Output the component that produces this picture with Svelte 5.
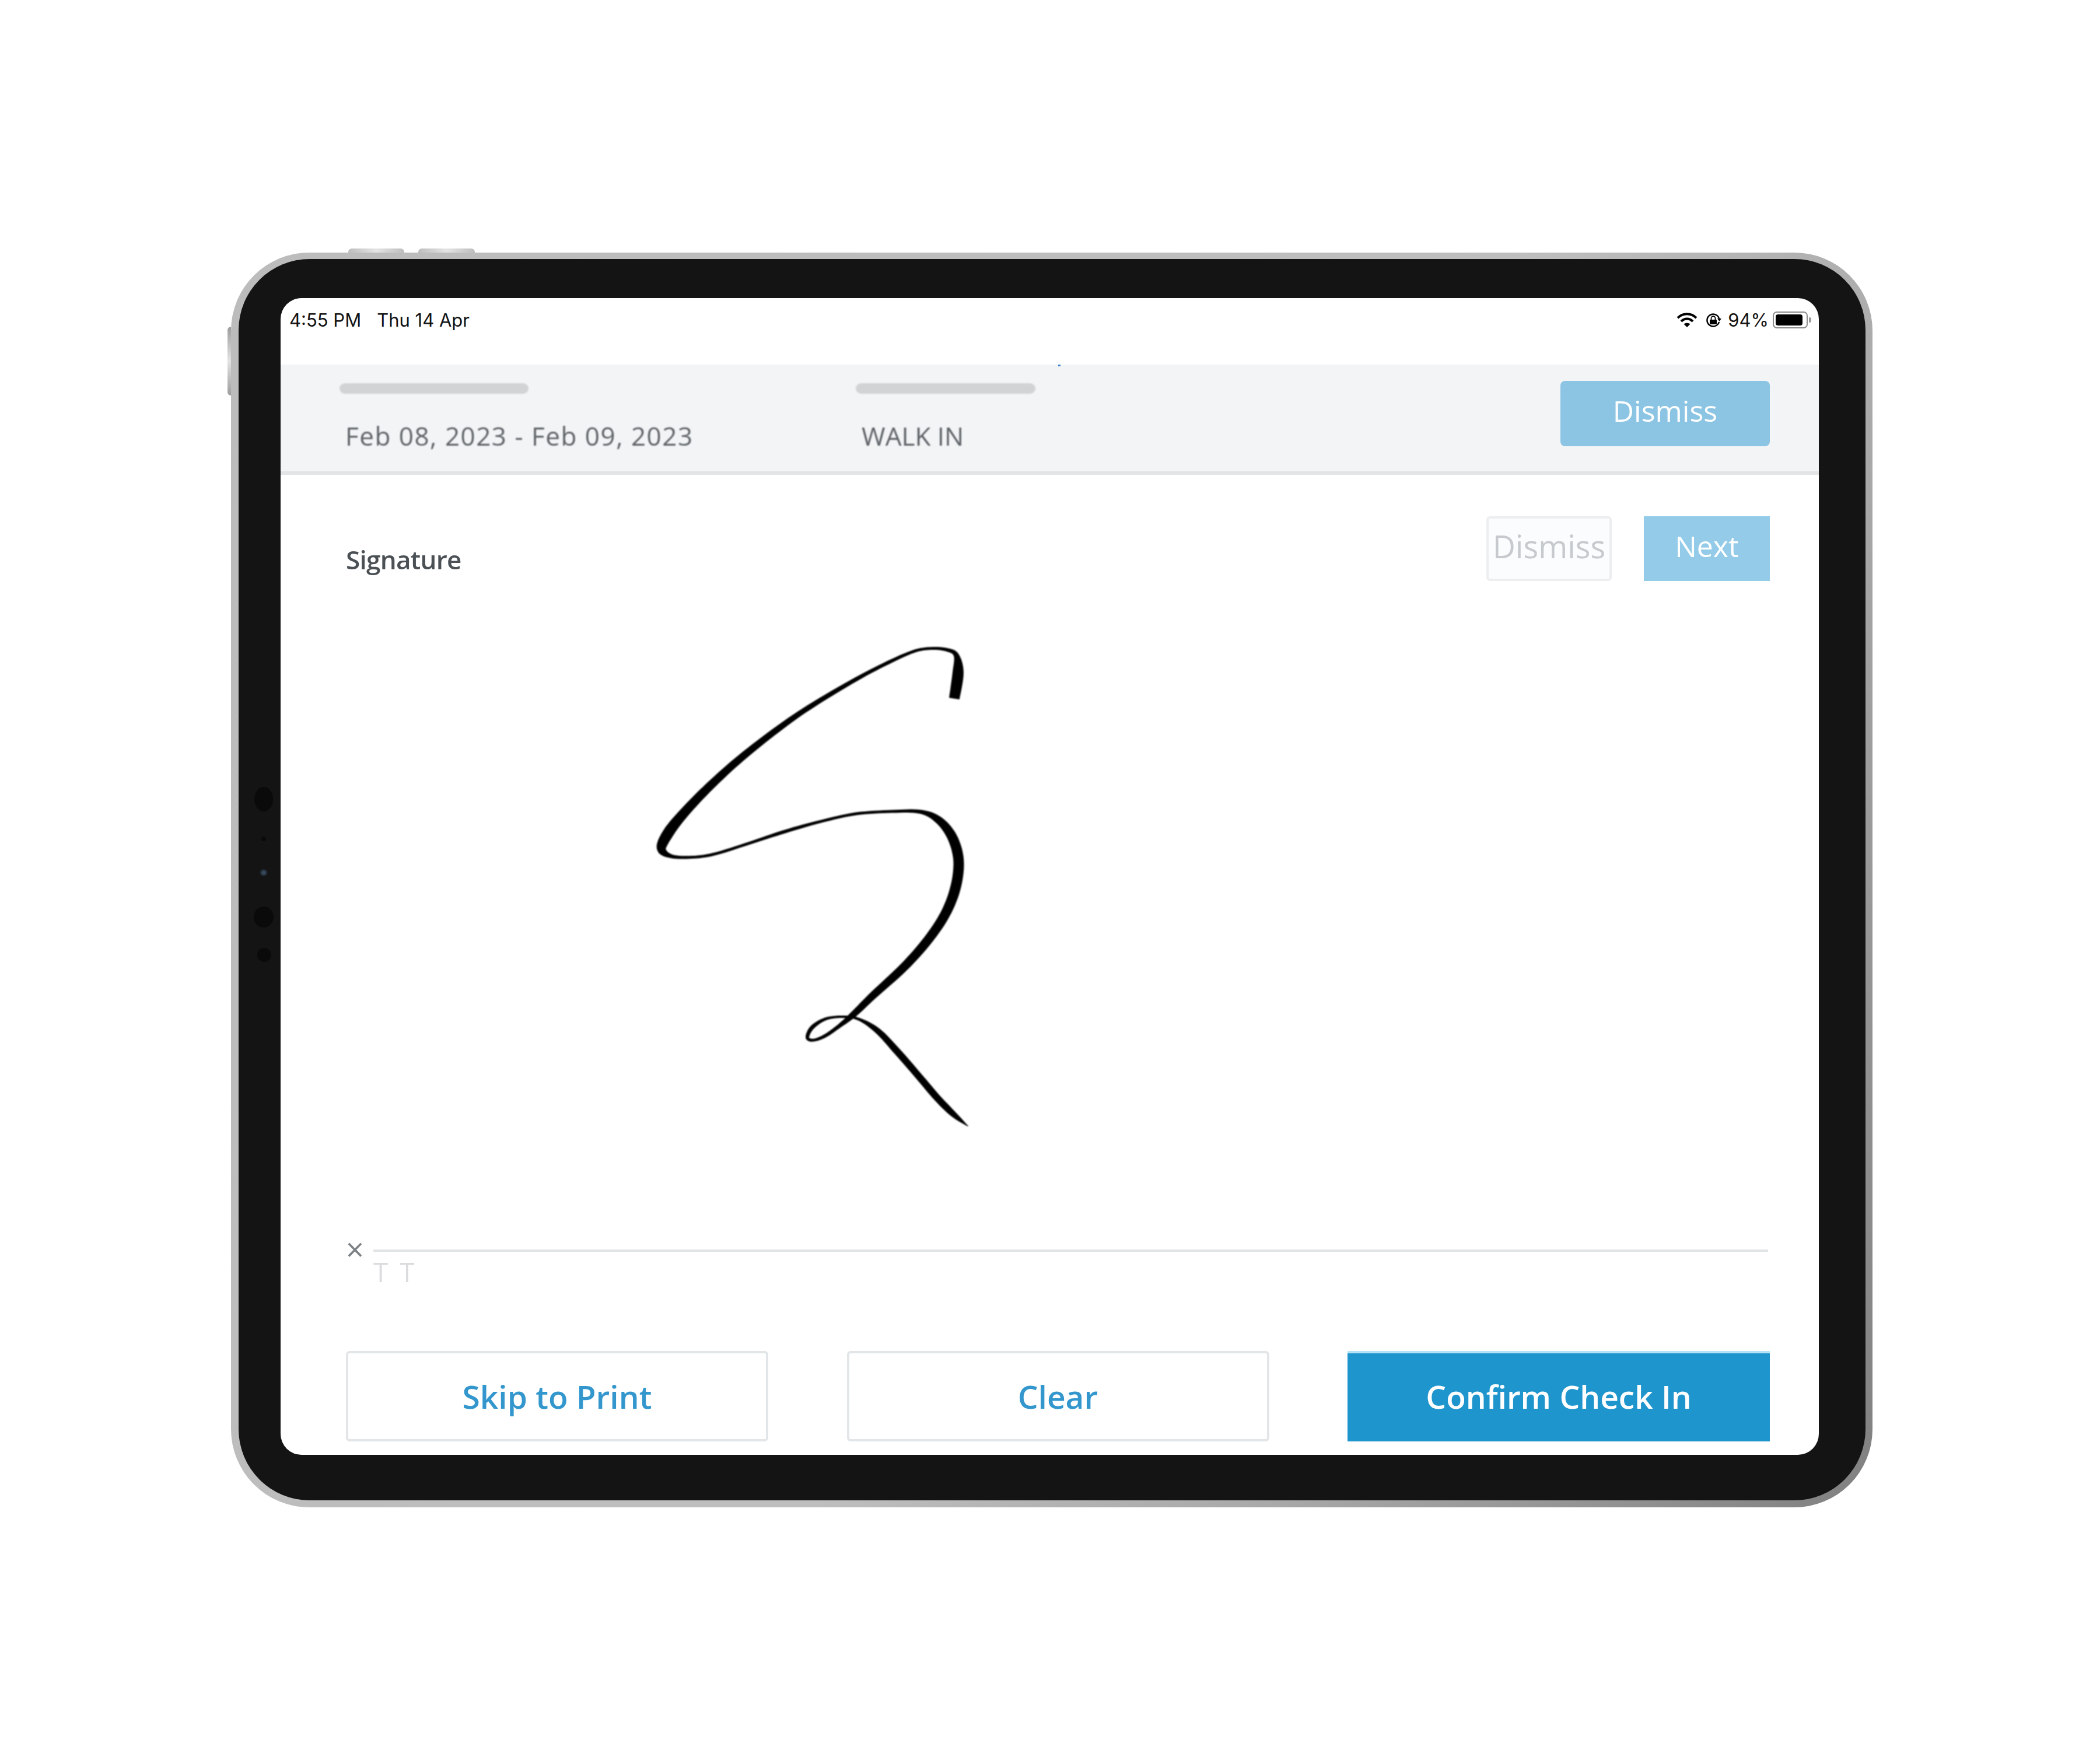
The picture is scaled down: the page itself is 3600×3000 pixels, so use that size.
<script>
  // signature centre line: x, y (in a 640x900 box, x/y scaled from the tablet), pen width
  const stroke = [
    [1362, 238, 18], [1378, 160, 19], [1370, 108, 9], [1330, 92, 6], [1270, 88, 5], [1200, 95, 5],
    [1100, 125, 6], [950, 180, 7], [750, 265, 9], [600, 340, 11], [450, 425, 13], [320, 510, 15],
    [220, 585, 17], [160, 640, 19], [132, 685, 16], [170, 708, 7], [250, 712, 5], [350, 703, 5],
    [500, 670, 5], [650, 635, 6], [800, 605, 5], [950, 582, 5], [1100, 575, 5], [1220, 576, 7],
    [1295, 600, 13], [1352, 650, 17], [1380, 720, 18], [1368, 800, 18], [1325, 880, 17], [1250, 960, 16],
    [1150, 1040, 15], [1020, 1125, 13], [940, 1180, 11], [880, 1215, 7], [820, 1245, 6], [770, 1258, 5],
    [745, 1250, 6], [765, 1220, 7], [820, 1195, 5], [890, 1188, 4], [960, 1195, 5], [1040, 1230, 10],
    [1120, 1290, 12], [1200, 1355, 12], [1290, 1430, 12], [1360, 1480, 10], [1420, 1515, 1]
  ].map(([x, y, w]) => [x / 2.45, y / 1.742, w]);

  function outline(pts) {
    const line = [];
    for (let i = 0; i < pts.length - 1; i++) {
      const p0 = pts[Math.max(i - 1, 0)];
      const p1 = pts[i];
      const p2 = pts[i + 1];
      const p3 = pts[Math.min(i + 2, pts.length - 1)];
      for (let s = 0; s < 8; s++) {
        const t = s / 8;
        const at = (k) =>
          0.5 * (2 * p1[k] + (p2[k] - p0[k]) * t + (2 * p0[k] - 5 * p1[k] + 4 * p2[k] - p3[k]) * t * t + (3 * p1[k] - p0[k] - 3 * p2[k] + p3[k]) * t * t * t);
        line.push([at(0), at(1), at(2)]);
      }
    }
    line.push(pts[pts.length - 1]);
    const left = [];
    const right = [];
    line.forEach((p, i) => {
      const a = line[Math.max(i - 1, 0)];
      const b = line[Math.min(i + 1, line.length - 1)];
      const dx = b[0] - a[0];
      const dy = b[1] - a[1];
      const len = Math.hypot(dx, dy) || 1;
      const nx = (-dy / len) * p[2] * 0.5;
      const ny = (dx / len) * p[2] * 0.5;
      left.push(`${(p[0] + nx).toFixed(1)} ${(p[1] + ny).toFixed(1)}`);
      right.unshift(`${(p[0] - nx).toFixed(1)} ${(p[1] - ny).toFixed(1)}`);
    });
    return "M" + left.concat(right).join("L") + "Z";
  }

  const signature = outline(stroke);
</script>

<div class="page">
  <div class="device">
    <span class="top-btn one"></span>
    <span class="top-btn two"></span>
    <span class="side-btn"></span>

    <div class="bezel">
      <span class="hole a"></span>
      <span class="hole b"></span>
      <span class="hole c"></span>
      <span class="hole d"></span>
      <span class="hole e"></span>

      <div class="screen">
        <div class="status">
          <div class="clock">
            <span>4:55 PM</span>
            <span>Thu 14 Apr</span>
          </div>
          <div class="indicators">
            <svg class="wifi" viewBox="0 0 36 25" width="36" height="25">
              <g fill="none" stroke="#000" stroke-width="4">
                <path d="M2 9 C11 0 25 0 34 9" />
                <path d="M8 15 C14 9 22 9 28 15" />
              </g>
              <path d="M12.500 19.500 C15.500 17 20.500 17 23.500 19.500 L18 25Z" fill="#000" />
            </svg>
            <svg class="lock" viewBox="0 0 28 24" width="28" height="24">
              <path d="M24 9 A10.500 10.500 0 1 0 24 15" fill="none" stroke="#000" stroke-width="2.500" />
              <path d="M21 9 L28 9 L24.500 14Z" fill="#000" />
              <rect x="8" y="11" width="12" height="8" rx="1" fill="#000" />
              <path d="M10.500 11 V8.500 A3.500 3.500 0 0 1 17.500 8.500 V11" fill="none" stroke="#000" stroke-width="1.800" />
            </svg>
            <span class="pct">94%</span>
            <div class="battery"><span></span></div>
            <span class="nub"></span>
          </div>
        </div>

        <header class="bar">
          <div class="field first">
            <span class="placeholder"></span>
            <span class="value date">Feb 08, 2023 - Feb 09, 2023</span>
          </div>
          <div class="field second">
            <span class="placeholder"></span>
            <span class="value">WALK IN</span>
          </div>
          <button class="dismiss-top">Dismiss</button>
          <span class="blue-dot"></span>
        </header>

        <main class="body">
          <div class="sig-head">
            <span class="sig-label">Signature</span>
            <div class="sig-actions">
              <button class="ghost">Dismiss</button>
              <button class="next">Next</button>
            </div>
          </div>

          <svg class="signature" viewBox="0 0 640 900" width="640" height="900">
            <path d={signature} fill="#000" />
          </svg>

          <div class="sign-line">
            <span class="cross">×</span>
            <div class="rule">
              <hr />
              <span class="initials">T T</span>
            </div>
          </div>

          <div class="actions">
            <button class="outline">Skip to Print</button>
            <button class="outline">Clear</button>
            <button class="primary">Confirm Check In</button>
          </div>
        </main>
      </div>
    </div>
  </div>
</div>

<style>
  :global(body) {
    background: #fff;
  }

  .page {
    width: 3600px;
    height: 3000px;
    box-sizing: border-box;
    padding: 433px 0 0 396px;
    font-family: "Open Sans", "Liberation Sans", sans-serif;
  }

  .device {
    position: relative;
    width: 2814px;
    height: 2151px;
    box-sizing: border-box;
    padding: 11px 12px 12px 13px;
    border-radius: 134px;
    background: linear-gradient(120deg, #bcbcbc 0%, #bebebe 55%, #a8a8a8 75%, #808080 100%);
  }

  .top-btn {
    position: absolute;
    top: -7px;
    height: 7px;
    border-radius: 6px 6px 0 0;
    background: linear-gradient(90deg, #bdbdbd, #e4e4e4 50%, #bdbdbd);
  }

  .top-btn.one {
    left: 201px;
    width: 96px;
  }

  .top-btn.two {
    left: 321px;
    width: 97px;
  }

  .side-btn {
    position: absolute;
    left: -6px;
    top: 127px;
    width: 6px;
    height: 118px;
    border-radius: 6px 0 0 6px;
    background: linear-gradient(180deg, #9c9c9c, #e2e2e2 50%, #9c9c9c);
  }

  .bezel {
    position: relative;
    box-sizing: border-box;
    height: 100%;
    padding: 67px 80px 78px 72px;
    border-radius: 122px;
    background: #141414;
  }

  .hole {
    position: absolute;
    border-radius: 50%;
    background: #0a0a0a;
  }

  .hole.a {
    left: 27px;
    top: 905px;
    width: 32px;
    height: 42px;
  }

  .hole.b {
    left: 39px;
    top: 990px;
    width: 8px;
    height: 8px;
  }

  .hole.c {
    left: 36px;
    top: 1046px;
    width: 14px;
    height: 12px;
    background: radial-gradient(circle, #3a4a5a 20%, #10161c 80%);
  }

  .hole.d {
    left: 26px;
    top: 1110px;
    width: 34px;
    height: 36px;
  }

  .hole.e {
    left: 32px;
    top: 1181px;
    width: 24px;
    height: 24px;
  }

  .screen {
    display: flex;
    flex-direction: column;
    height: 100%;
    overflow: hidden;
    border-radius: 36px;
    background: #fff;
  }

  .status {
    flex: none;
    display: flex;
    justify-content: space-between;
    box-sizing: border-box;
    height: 114px;
    padding: 20px 13px 0 15px;
    font-family: Inter, "Liberation Sans", sans-serif;
    font-size: 31px;
    line-height: 36px;
    color: #111;
  }

  .clock {
    display: flex;
    gap: 27px;
  }

  .indicators {
    display: flex;
    align-items: flex-start;
  }

  .wifi {
    margin-top: 5px;
  }

  .lock {
    margin: 6px 0 0 13px;
  }

  .pct {
    margin-left: 11px;
  }

  .battery {
    margin: 3px 0 0 7px;
    box-sizing: border-box;
    width: 60px;
    height: 29px;
    padding: 3px;
    border: 2px solid #8a8a8a;
    border-radius: 7px;
  }

  .battery span {
    display: block;
    width: 92%;
    height: 100%;
    border-radius: 4px;
    background: #000;
  }

  .nub {
    margin: 13px 0 0 2px;
    width: 4px;
    height: 9px;
    border-radius: 0 3px 3px 0;
    background: #9a9a9a;
  }

  .bar {
    position: relative;
    flex: none;
    display: flex;
    box-sizing: border-box;
    height: 189px;
    padding: 0 84px 0 101px;
    border-bottom: 6px solid #e2e4e6;
    background: #f3f4f6;
  }

  .field {
    display: flex;
    flex-direction: column;
    padding-top: 32px;
    filter: blur(0.8px);
  }

  .field.first {
    width: 885px;
  }

  .field.first .placeholder {
    width: 324px;
  }

  .field.second .placeholder {
    width: 308px;
  }

  .placeholder {
    height: 18px;
    border-radius: 9px;
    background: #d2d3d4;
  }

  .value {
    margin: 42px 0 0 10px;
    font-size: 44px;
    line-height: 60px;
    color: #5e6367;
  }

  .value.date {
    letter-spacing: 1.5px;
  }

  .dismiss-top {
    margin: 28px 0 0 auto;
    width: 359px;
    height: 112px;
    padding-bottom: 10px;
    border-radius: 8px;
    background: #8cc4e3;
  }

  .blue-dot {
    position: absolute;
    left: 1333px;
    top: 0;
    width: 4px;
    height: 3px;
    background: #3a7fd0;
  }

  button {
    padding: 0;
    border: none;
    font-family: inherit;
    font-size: 50px;
    font-weight: 500;
    color: #fff;
    filter: blur(0.7px);
  }

  .body {
    flex: 1;
    display: flex;
    flex-direction: column;
    padding: 71px 84px 23px 112px;
    min-height: 0;
  }

  .sig-head {
    flex: none;
    display: flex;
    justify-content: space-between;
  }

  .sig-label {
    padding-top: 44px;
    font-size: 44px;
    font-weight: 600;
    line-height: 60px;
    letter-spacing: -0.7px;
    color: #4b5055;
    filter: blur(0.7px);
  }

  .sig-actions {
    display: flex;
    gap: 55px;
  }

  .ghost {
    width: 215px;
    height: 111px;
    padding-bottom: 9px;
    border: 4px solid #eceef0;
    border-radius: 6px;
    background: #fbfcfd;
    color: #c6c9cd;
    font-size: 54px;
  }

  .next {
    width: 216px;
    height: 111px;
    padding-bottom: 10px;
    background: #93cbe8;
  }

  .signature {
    flex: none;
    display: block;
    margin: 65px 0 0 487px;
    filter: blur(0.8px);
  }

  .sign-line {
    flex: none;
    display: flex;
    margin-top: 158px;
    padding-right: 3px;
    filter: blur(0.6px);
  }

  .cross {
    width: 47px;
    font-size: 54px;
    line-height: 44px;
    color: #7c8186;
  }

  .rule {
    flex: 1;
    padding-top: 23px;
  }

  hr {
    height: 4px;
    margin: 0;
    border: none;
    background: #e2e5e6;
  }

  .initials {
    display: block;
    margin-top: 11px;
    font-size: 46px;
    line-height: 46px;
    letter-spacing: 4px;
    color: #dadcde;
  }

  .actions {
    flex: none;
    display: grid;
    grid-template-columns: repeat(3, 724px);
    justify-content: space-between;
    margin-top: auto;
  }

  .actions button {
    height: 155px;
    font-size: 55px;
    font-weight: 600;
  }

  .outline {
    box-sizing: border-box;
    border: 4px solid #e3e6e8;
    border-radius: 6px;
    background: #fff;
    color: #3397cd;
  }

  .primary {
    background: #1e95cc;
    box-shadow: inset 0 4px 0 #b5e2f5;
  }
</style>
